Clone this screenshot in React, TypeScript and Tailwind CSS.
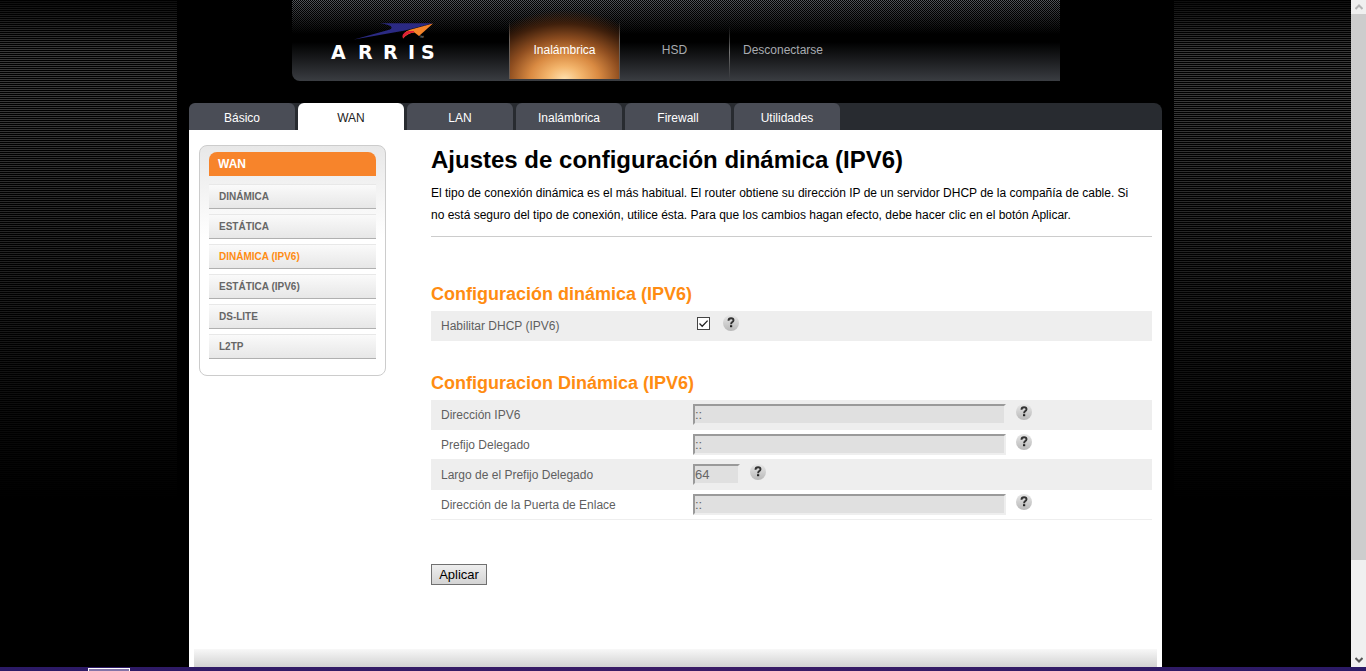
import type { ReactNode } from "react";

const tabs = ["Básico", "WAN", "LAN", "Inalámbrica", "Firewall", "Utilidades"];

const sideItems = [
  "DINÁMICA",
  "ESTÁTICA",
  "DINÁMICA (IPV6)",
  "ESTÁTICA (IPV6)",
  "DS-LITE",
  "L2TP",
];

function Logo() {
  return (
    <svg viewBox="0 0 110 42" className="h-[42px] w-[110px]" role="img" aria-label="ARRIS">
      <path d="M26 19.500 L62 9.500 Q66 7 60 5 Q57 3.800 52 3.300 L105 3.300 L77 10.500 Z" fill="#2b2a83" />
      <path d="M105 3.500 L91 16 L86.500 12.500 Q80 13 75 18.500 Q74 12.500 82 9.800 Z" fill="#f5842a" />
      <path d="M86 12.500 Q79 13 75 18.500 Q72.500 13.500 80 11 L86 11 Z" fill="#e01f36" />
      <text x="91" y="19" fill="#aaaaaa" fontSize="5" fontFamily="Liberation Sans, sans-serif">
        ™
      </text>
      <text
        x="3 30 55 80 93"
        y="39"
        fill="#ffffff"
        fontSize="19"
        fontWeight="700"
        fontFamily="DejaVu Sans, sans-serif"
      >
        ARRIS
      </text>
    </svg>
  );
}

function Help() {
  return (
    <button
      type="button"
      aria-label="Ayuda"
      className="flex size-4 items-center justify-center rounded-full bg-linear-to-b from-[#e8e8e8] to-[#b8b8b8]"
    >
      <svg viewBox="0 0 16 16" className="size-4" aria-hidden="true">
        <path
          d="M5.500 5.800 Q5.500 3.300 8.100 3.300 Q10.500 3.300 10.500 5.300 Q10.500 6.500 9.200 7.200 Q8.100 7.800 8.100 9.200"
          fill="none"
          stroke="#333333"
          strokeWidth="1.900"
        />
        <rect x="7" y="10.200" width="2.200" height="2" fill="#222222" />
      </svg>
    </button>
  );
}

function Row({ id, label, shaded, children }: { id: string; label: string; shaded?: boolean; children: ReactNode }) {
  return (
    <div className={shaded ? "flex h-[30px] bg-[#eeeeee]" : "flex h-[30px] border-b border-[#eeeeee]"}>
      <label htmlFor={id} className="w-[262px] pl-[10px] leading-[30px] text-[#5f5f5f]">
        {label}
      </label>
      <div className="flex items-start gap-[10px] pt-1">
        {children}
        <Help />
      </div>
    </div>
  );
}

function Field({ id, value, short }: { id: string; value: string; short?: boolean }) {
  return (
    <input
      id={id}
      type="text"
      disabled
      defaultValue={value}
      className={
        (short ? "w-[47px]" : "w-[313px]") +
        " h-[21px] border-2 border-t-[#9a9a9a] border-r-[#eeeeee] border-b-[#eeeeee] border-l-[#9a9a9a] bg-[#e0e0e0] text-[13px] text-[#666666]"
      }
    />
  );
}

function Scrollbar() {
  return (
    <div className="flex w-[15px] shrink-0 flex-col bg-[#f0f0f0]" aria-hidden="true">
      <div className="flex h-[14px] items-center justify-center">
        <svg viewBox="0 0 8 6" className="h-[6px] w-2">
          <path d="M0.500 5 L4 1.500 L7.500 5" fill="none" stroke="#b5b5b5" strokeWidth="2" />
        </svg>
      </div>
      <div className="flex-[546] bg-[#cdcdcd]" />
      <div className="flex-[93]" />
      <div className="flex h-[14px] items-center justify-center">
        <svg viewBox="0 0 8 6" className="h-[6px] w-2">
          <path d="M0.500 1 L4 4.500 L7.500 1" fill="none" stroke="#555555" strokeWidth="2" />
        </svg>
      </div>
    </div>
  );
}

export default function App() {
  return (
    <div className="flex min-h-screen flex-col bg-black font-['Liberation_Sans',Arial,sans-serif] text-[12px]">
      <div className="flex flex-1">
        <div className="flex flex-1 justify-center bg-[linear-gradient(to_bottom,rgba(0,0,0,0.75)_0px,rgba(0,0,0,0)_50px,rgba(0,0,0,0)_100px,#000_500px),repeating-linear-gradient(to_bottom,#000_0px,#000_1px,#383838_1px,#383838_2px)]">
          <div className="flex w-[997px] flex-col bg-black px-3">
            <header className="ml-[103px] h-[81px] w-[768px] rounded-bl-lg bg-[linear-gradient(to_bottom,transparent_0px,#000_34px,#000_42px,#3a3d42_81px),repeating-conic-gradient(#55585d_0_25%,#000_0_50%)] bg-[size:100%_100%,2px_2px]">
              <div className="flex h-[79px]">
                <a href="#inicio" className="w-[217px] pt-5 pl-9">
                  <Logo />
                </a>
                <nav className="flex flex-1 text-[#a8abb0]">
                  <a
                    href="#inalambrica"
                    className="mt-[10px] w-[111px] bg-[linear-gradient(to_bottom,transparent_10px,#6a625c_30px,#6a5a50_69px),linear-gradient(to_bottom,transparent_10px,#6a625c_30px,#6a5a50_69px),radial-gradient(ellipse_96px_69px_at_50%_100%,#ffe0ac_0%,#f3b56c_18%,#d98a42_36%,#8f4e20_58%,#40200c_80%,transparent_100%)] bg-[size:1px_100%,1px_100%,100%_100%] bg-[position:left,right,center] bg-no-repeat text-center leading-[80px] text-white"
                  >
                    Inalámbrica
                  </a>
                  <a href="#hsd" className="w-[109px] text-center leading-[100px]">
                    HSD
                  </a>
                  <span className="mt-[26px] w-px bg-linear-to-b from-transparent via-[#777777] to-transparent" />
                  <a href="#salir" className="pl-[13px] leading-[100px]">
                    Desconectarse
                  </a>
                </nav>
              </div>
            </header>

            <nav className="mt-[22px] flex h-[27px] gap-[3px] rounded-t-lg bg-[#282b30]">
              {tabs.map((tab) => (
                <a
                  key={tab}
                  href={"#" + tab}
                  className={
                    tab === "WAN"
                      ? "w-[106px] rounded-t-md bg-white text-center leading-[30px] text-[#222222]"
                      : "w-[106px] rounded-t-md bg-[#4a4d56] text-center leading-[30px] text-white"
                  }
                >
                  {tab}
                </a>
              ))}
            </nav>

            <div className="flex flex-1 flex-col bg-white">
              <div className="flex items-start pt-[15px] pr-[10px] pl-[10px]">
                <aside className="mr-[45px] h-[231px] w-[187px] shrink-0 rounded-lg border border-[#cccccc] bg-linear-to-b from-[#e8e8e8] to-white to-40% px-[9px] pt-[6px]">
                  <h2 className="h-6 rounded-t-lg bg-[#f7842b] pl-[9px] font-bold leading-6 text-white">WAN</h2>
                  <ul className="mt-2 flex flex-col gap-[5px]">
                    {sideItems.map((item) => (
                      <li key={item}>
                        <a
                          href={"#" + item}
                          className={
                            "block h-[25px] border-t border-b border-t-[#e8e8e8] border-b-[#b0b0b0] bg-linear-to-b from-[#fafafa] to-[#e7e7e7] pl-[10px] text-[10px] font-bold leading-6 " +
                            (item === "DINÁMICA (IPV6)" ? "text-[#ff8c12]" : "text-[#666666]")
                          }
                        >
                          {item}
                        </a>
                      </li>
                    ))}
                  </ul>
                </aside>

                <main className="min-w-0 flex-1">
                  <h1 className="text-[24px] font-bold leading-[30px] text-black">
                    Ajustes de configuración dinámica (IPV6)
                  </h1>
                  <p className="mt-[7px] border-b border-[#cccccc] pr-2 pb-[10px] leading-[22px] text-black">
                    El tipo de conexión dinámica es el más habitual. El router obtiene su dirección IP de un servidor
                    DHCP de la compañía de cable. Si no está seguro del tipo de conexión, utilice ésta. Para que los
                    cambios hagan efecto, debe hacer clic en el botón Aplicar.
                  </p>
                  <form>
                    <h2 className="mt-[46px] mb-[6px] text-[18px] font-bold leading-[22px] text-[#ff8c12]">
                      Configuración dinámica (IPV6)
                    </h2>
                    <Row id="dhcp" label="Habilitar DHCP (IPV6)" shaded>
                      <span className="relative mt-[2px] mr-[3px] ml-1 flex size-[13px]">
                        <input
                          id="dhcp"
                          type="checkbox"
                          defaultChecked
                          className="peer size-[13px] appearance-none border border-[#444444] bg-white"
                        />
                        <svg
                          viewBox="0 0 13 13"
                          className="pointer-events-none absolute inset-0 hidden size-[13px] peer-checked:block"
                          aria-hidden="true"
                        >
                          <path d="M2.500 6.500 L5.200 9.200 L10.600 3.600" fill="none" stroke="#222222" strokeWidth="1.300" />
                        </svg>
                      </span>
                    </Row>
                    <h2 className="mt-[31px] mb-[6px] text-[18px] font-bold leading-[22px] text-[#ff8c12]">
                      Configuracion Dinámica (IPV6)
                    </h2>
                    <Row id="ipv6" label="Dirección IPV6" shaded>
                      <Field id="ipv6" value="::" />
                    </Row>
                    <Row id="prefijo" label="Prefijo Delegado">
                      <Field id="prefijo" value="::" />
                    </Row>
                    <Row id="largo" label="Largo de el Prefijo Delegado" shaded>
                      <Field id="largo" value="64" short />
                    </Row>
                    <Row id="puerta" label="Dirección de la Puerta de Enlace">
                      <Field id="puerta" value="::" />
                    </Row>
                    <button
                      type="submit"
                      className="mt-11 h-[21px] w-14 border border-[#707070] bg-linear-to-b from-[#eeeeee] to-[#d4d4d4] text-[13px] leading-[19px] text-black"
                    >
                      Aplicar
                    </button>
                  </form>
                </main>
              </div>
              <div className="mx-[5px] mt-auto h-[18px] bg-linear-to-b from-[#f8f8f8] to-[#d2d2d2]" />
            </div>
          </div>
        </div>
        <Scrollbar />
      </div>
      <div className="flex h-1 bg-linear-to-r from-[#2b1a66] via-[#3a1c66] to-[#2b1a66]">
        <div className="mt-px ml-[88px] w-[42px] border border-b-0 border-white bg-[#8474a8]" />
      </div>
    </div>
  );
}
